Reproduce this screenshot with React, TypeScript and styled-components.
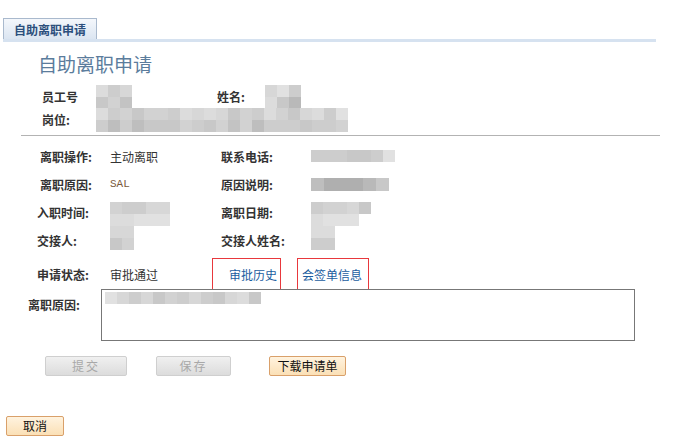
import React from "react";
import styled, { createGlobalStyle } from "styled-components";

const GlobalStyle = createGlobalStyle`
  body {
    margin: 0;
    background: #fff;
    font-family: "Noto Sans CJK SC", "Liberation Sans", sans-serif;
    font-size: 12px;
    color: #333;
  }
`;

const Page = styled.div`
  width: 676px;
  height: 443px;
  padding-top: 18px;
  box-sizing: border-box;
  overflow: hidden;
`;

const TabBar = styled.div`
  margin-left: 3px;
  width: 653px;
  display: flex;
  border-bottom: 3px solid #d6e2f0;
`;

const Tab = styled.div`
  height: 21px;
  box-sizing: border-box;
  padding: 0 10px;
  display: flex;
  align-items: center;
  border: 1px solid #a9b9cd;
  border-bottom: none;
  background: linear-gradient(#f4f7fb, #dbe5f1);
  color: #2c4f7c;
  font-weight: bold;
  font-size: 12px;
`;

const Title = styled.h1`
  margin: 8px 0 0 38px;
  height: 28px;
  line-height: 28px;
  font-size: 19px;
  font-weight: normal;
  color: #5b7c9c;
`;

const HeaderGrid = styled.div`
  margin: 7px 0 0 42px;
  display: grid;
  grid-template-columns: 54px 121px 48px 1fr;
  grid-auto-rows: 23px;
  align-items: center;
`;

const Label = styled.span<{ $indent?: number }>`
  font-weight: bold;
  color: #333;
  white-space: nowrap;
  padding-left: ${(p) => p.$indent ?? 0}px;
`;

const Value = styled.span<{ $color?: string; $mono?: boolean }>`
  color: ${(p) => p.$color ?? "#333"};
  white-space: nowrap;
  font-family: ${(p) =>
    p.$mono ? '"Liberation Mono", monospace' : "inherit"};
  font-size: ${(p) => (p.$mono ? "11px" : "12px")};
`;

const Cell = styled.div<{ $top?: number }>`
  height: 100%;
  display: flex;
  align-items: ${(p) => (p.$top !== undefined ? "flex-start" : "center")};
  padding-top: ${(p) => p.$top ?? 0}px;
  box-sizing: border-box;
  overflow: visible;
`;

const Divider = styled.hr`
  margin: 4px 0 0 21px;
  width: 639px;
  border: none;
  border-top: 1px solid #b3b3b3;
`;

const DetailGrid = styled.div`
  margin: 6px 0 0 37px;
  display: grid;
  grid-template-columns: 73px 111px 90px 1fr;
  grid-auto-rows: 28px;
  align-items: center;
`;

const StatusRow = styled.div`
  margin: 4px 0 0 37px;
  height: 32px;
  display: flex;
  align-items: center;
`;

const StatusLabel = styled(Label)`
  width: 73px;
`;

const StatusValue = styled.span`
  width: 102px;
  color: #333;
`;

const LinkBox = styled.a<{ $pad: string; $width: number }>`
  width: ${(p) => p.$width}px;
  height: 32px;
  box-sizing: border-box;
  border: 1px solid #e8383d;
  display: flex;
  align-items: center;
  padding: ${(p) => p.$pad};
  color: #1b5da0;
  text-decoration: none;
  cursor: pointer;
  & + & {
    margin-left: 16px;
  }
`;

const ReasonRow = styled.div`
  margin: -1px 0 0 28px;
  display: flex;
  align-items: flex-start;
`;

const ReasonLabel = styled(Label)`
  width: 73px;
  line-height: 30px;
  padding-top: 1px;
`;

const TextBox = styled.div`
  width: 534px;
  height: 52px;
  box-sizing: border-box;
  border: 1px solid #777;
  padding: 2px 3px;
`;

const ButtonRow = styled.div`
  margin: 15px 0 0 45px;
  display: flex;
  align-items: center;
`;

const Button = styled.button<{ $width: number; $gap?: number; $disabled?: boolean }>`
  width: ${(p) => p.$width}px;
  height: 20px;
  margin-left: ${(p) => p.$gap ?? 0}px;
  padding: 0;
  font-family: inherit;
  font-size: 12px;
  line-height: 18px;
  border-radius: 2px;
  border: 1px solid ${(p) => (p.$disabled ? "#cfcfcf" : "#d9a06a")};
  background: ${(p) =>
    p.$disabled
      ? "linear-gradient(#f0f0f0, #dcdcdc)"
      : "linear-gradient(#fff3df, #fbe0b6)"};
  color: ${(p) => (p.$disabled ? "#a8a8a8" : "#111")};
  letter-spacing: ${(p) => (p.$disabled ? "2px" : "0")};
`;

const CancelRow = styled.div`
  margin: 40px 0 0 6px;
`;

const MosaicWrap = styled.div<{ $cols: number; $cell: number }>`
  display: grid;
  grid-template-columns: repeat(${(p) => p.$cols}, ${(p) => p.$cell}px);
  grid-auto-rows: ${(p) => p.$cell}px;
  filter: blur(0.5px);
`;

const Pixel = styled.div``;

// shades: rows of hex digits, "." for blank
function Mosaic({ rows, cell = 12 }: { rows: string[]; cell?: number }) {
  const cols = Math.max(...rows.map((r) => r.length));
  return (
    <MosaicWrap $cols={cols} $cell={cell}>
      {rows.flatMap((r, ri) =>
        Array.from({ length: cols }).map((_, ci) => {
          const ch = r[ci] ?? ".";
          if (ch === ".") return <Pixel key={`${ri}-${ci}`} />;
          const v = 0xa0 + parseInt(ch, 16) * 5;
          const hex = v.toString(16);
          return (
            <Pixel key={`${ri}-${ci}`} style={{ background: `#${hex}${hex}${hex}` }} />
          );
        })
      )}
    </MosaicWrap>
  );
}

export default function App() {
  return (
    <Page>
      <GlobalStyle />
      <TabBar>
        <Tab>自助离职申请</Tab>
      </TabBar>
      <Title>自助离职申请</Title>

      <HeaderGrid>
        <Label>员工号</Label>
        <Cell>
          <Mosaic rows={["c9b", "8a7"]} cell={12} />
        </Cell>
        <Label>姓名:</Label>
        <Cell>
          <Mosaic rows={["bd9", "c85"]} cell={12} />
        </Cell>
        <Label>岗位:</Label>
        <Cell style={{ gridColumn: "2 / 5" }}>
          <Mosaic
            rows={["c9a8aa9cbcb8a9ca8bc9d", "9696888a98a7a6999899a"]}
            cell={12}
          />
        </Cell>
      </HeaderGrid>

      <Divider />

      <DetailGrid>
        <Label $indent={3}>离职操作:</Label>
        <Value>主动离职</Value>
        <Label>联系电话:</Label>
        <Cell>
          <Mosaic rows={["999889d"]} cell={12} />
        </Cell>

        <Label $indent={3}>离职原因:</Label>
        <Value $mono $color="#7a5a3a">SAL</Value>
        <Label>原因说明:</Label>
        <Cell>
          <Mosaic rows={["633358"]} cell={13} />
        </Cell>

        <Label>入职时间:</Label>
        <Cell $top={4}>
          <Mosaic rows={["a99bb", "ccddd", "bb...", "8a..."]} cell={12} />
        </Cell>
        <Label>离职日期:</Label>
        <Cell $top={4}>
          <Mosaic rows={["9aab8", "cddd.", "cc...", "99..."]} cell={12} />
        </Cell>

        <Label>交接人:</Label>
        <span />
        <Label>交接人姓名:</Label>
        <span />
      </DetailGrid>

      <StatusRow>
        <StatusLabel>申请状态:</StatusLabel>
        <StatusValue>审批通过</StatusValue>
        <LinkBox $width={69} $pad="0 0 0 16px">审批历史</LinkBox>
        <LinkBox $width={72} $pad="0 0 0 4px">会签单信息</LinkBox>
      </StatusRow>

      <ReasonRow>
        <ReasonLabel>离职原因:</ReasonLabel>
        <TextBox>
          <Mosaic rows={["db9b8a9b98bc8"]} cell={12} />
        </TextBox>
      </ReasonRow>

      <ButtonRow>
        <Button $width={82} $disabled>提交</Button>
        <Button $width={75} $gap={29} $disabled>保存</Button>
        <Button $width={77} $gap={38}>下载申请单</Button>
      </ButtonRow>

      <CancelRow>
        <Button $width={58}>取消</Button>
      </CancelRow>
    </Page>
  );
}
